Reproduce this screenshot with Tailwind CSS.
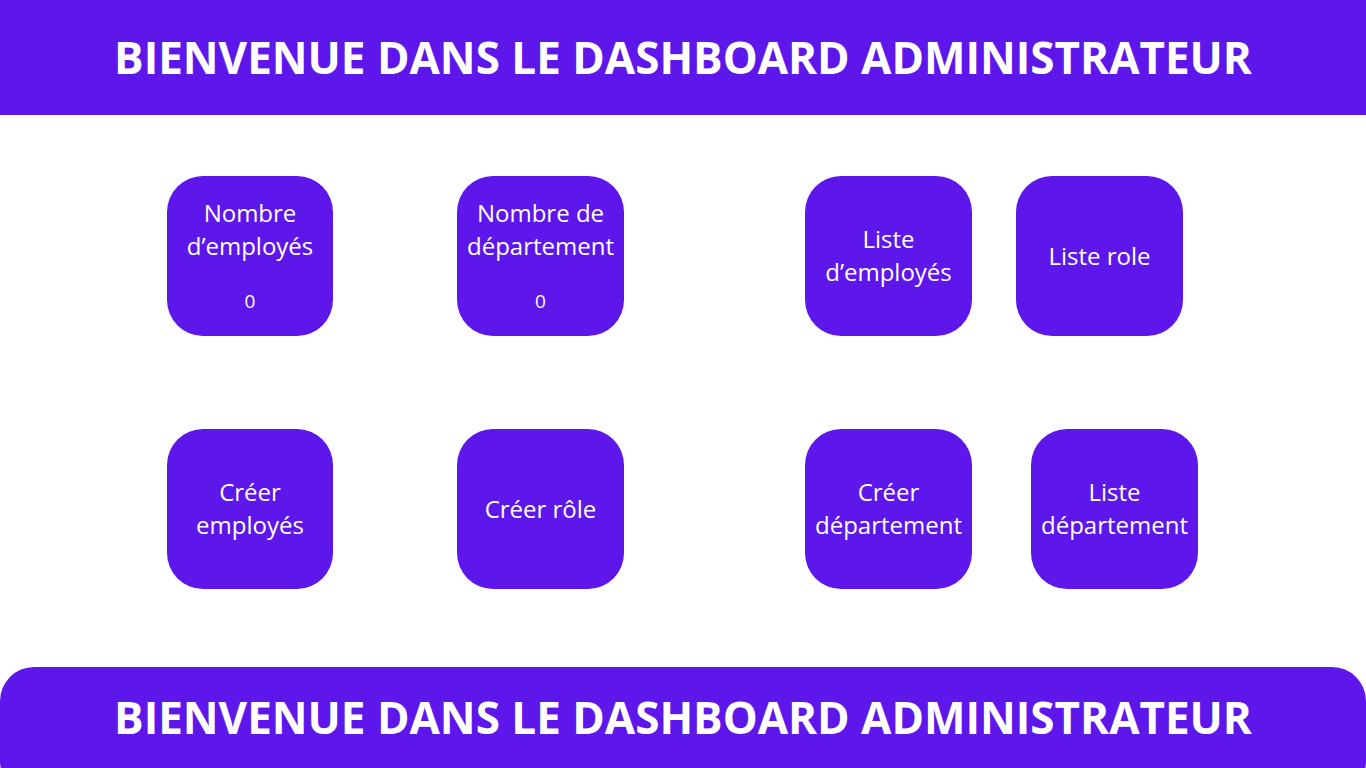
<!DOCTYPE html>
<html lang="fr">
<head>
<meta charset="utf-8">
<meta name="viewport" content="width=device-width, initial-scale=1">
<title>Dashboard administrateur</title>
<script src="https://cdn.jsdelivr.net/npm/@tailwindcss/browser@4"></script>
</head>
<body class="flex min-h-screen flex-col overflow-x-hidden bg-white font-['Open_Sans',sans-serif] text-white">
<header class="bg-[#5d17eb] pt-[27px] pb-7">
  <h1 class="text-center text-[44px] leading-[60px] font-bold">BIENVENUE DANS LE DASHBOARD ADMINISTRATEUR</h1>
</header>
<main class="mx-auto flex w-full max-w-[1366px] grow flex-col gap-[93px] pt-[61px] pb-[78px] pl-[167px] text-center text-2xl leading-[33px]">
  <section class="flex">
    <div class="mr-[124px] flex h-40 w-[166px] shrink-0 flex-col items-center rounded-[36px] bg-[#5d17eb] pt-5">
      <h2>Nombre<br>d’employés</h2>
      <p class="mt-6 text-[19px] leading-[30px]">0</p>
    </div>
    <div class="mr-[181px] flex h-40 w-[167px] shrink-0 flex-col items-center rounded-[36px] bg-[#5d17eb] pt-5">
      <h2>Nombre de<br>département</h2>
      <p class="mt-6 text-[19px] leading-[30px]">0</p>
    </div>
    <button type="button" class="mr-11 h-40 w-[167px] shrink-0 rounded-[36px] bg-[#5d17eb] pb-0.5">Liste<br>d’employés</button>
    <button type="button" class="h-40 w-[167px] shrink-0 rounded-[36px] bg-[#5d17eb] pb-0.5">Liste role</button>
  </section>
  <nav class="flex">
    <button type="button" class="mr-[124px] h-40 w-[166px] shrink-0 rounded-[36px] bg-[#5d17eb] pb-0.5">Créer<br>employés</button>
    <button type="button" class="mr-[181px] h-40 w-[167px] shrink-0 rounded-[36px] bg-[#5d17eb] pb-0.5">Créer rôle</button>
    <button type="button" class="mr-[59px] h-40 w-[167px] shrink-0 rounded-[36px] bg-[#5d17eb] pb-0.5">Créer<br>département</button>
    <button type="button" class="h-40 w-[167px] shrink-0 rounded-[36px] bg-[#5d17eb] pb-0.5">Liste<br>département</button>
  </nav>
</main>
<footer class="h-[101px] overflow-hidden">
  <div class="h-32 rounded-[34px] bg-[#5d17eb] pt-5">
    <p class="text-center text-[44px] leading-[60px] font-bold">BIENVENUE DANS LE DASHBOARD ADMINISTRATEUR</p>
  </div>
</footer>
</body>
</html>
